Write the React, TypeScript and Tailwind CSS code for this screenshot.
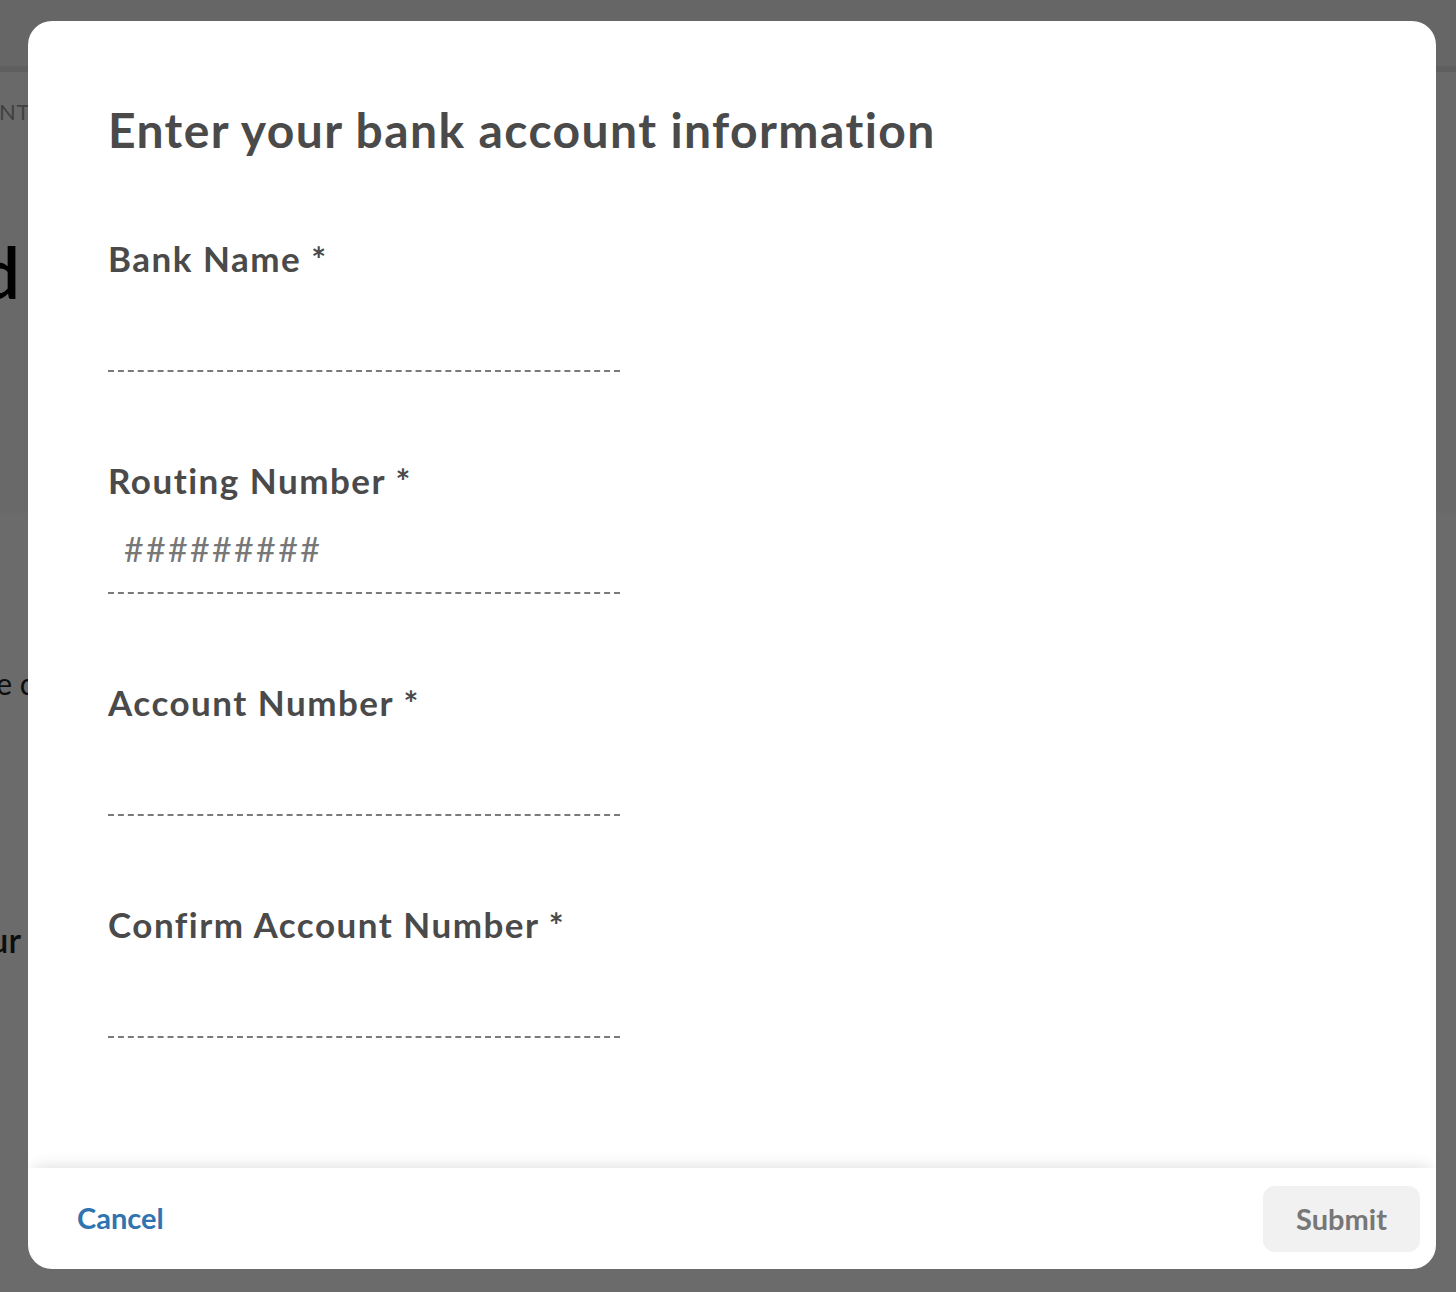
import { useState } from 'react'

const fields = [
  { label: 'Bank Name', placeholder: '' },
  { label: 'Routing Number', placeholder: '#########' },
  { label: 'Account Number', placeholder: '' },
  { label: 'Confirm Account Number', placeholder: '' },
]

const font = { fontFamily: 'Lato, "Open Sans", sans-serif' }

export default function App() {
  const [values, setValues] = useState<string[]>(['', '', '', ''])

  return (
    <div className="relative w-[1456px] h-[1292px] overflow-hidden bg-white" style={font}>
      {/* page behind the dialog */}
      <div className="flex flex-col h-full">
        <div className="h-[72px] bg-[#f4f4f4] border-b-[6px] border-[#e2e2e2]" />
        <div className="h-[441px] bg-[#fafafa] pt-[25px]">
          <div className="w-[30px] flex justify-end whitespace-nowrap text-[22px] leading-[30px] tracking-wide text-[#9a9a9a]">
            PAYMENT
          </div>
          <div className="mt-[108px] w-[20px] flex justify-end whitespace-nowrap text-[72px] font-semibold leading-none text-black">
            Add
          </div>
        </div>
        <div className="flex-1 bg-white">
          <div className="mt-[152px] w-[34px] flex justify-end whitespace-nowrap text-[30px] leading-[36px] text-[#222]">
            the c
          </div>
          <div className="mt-[219px] w-[21px] flex justify-end whitespace-nowrap text-[34px] leading-[40px] font-semibold text-[#222]">
            your
          </div>
        </div>
      </div>

      {/* overlay */}
      <div className="absolute inset-0 bg-[rgba(0,0,0,0.58)]" />

      {/* dialog */}
      <div className="absolute left-[28px] top-[21px] w-[1408px] h-[1248px] bg-white rounded-[24px] flex flex-col overflow-hidden">
        <div className="flex-1 pl-[80px] pt-[85px]">
          <h1 className="text-[48px] font-bold text-[#4a4a4a] leading-none tracking-[1.4px]">
            Enter your bank account information
          </h1>
          <div className="mt-[82px] flex flex-col gap-[86px]">
            {fields.map((f, i) => (
              <div key={i} className="flex flex-col w-[512px]">
                <label className="text-[35px] font-bold text-[#4a4a4a] leading-[44px] tracking-[1.5px]">
                  {f.label} *
                </label>
                <input
                  value={values[i]}
                  onChange={(e) => {
                    const next = [...values]
                    next[i] = e.target.value
                    setValues(next)
                  }}
                  placeholder={f.placeholder}
                  className="mt-[24px] h-[68px] pb-[22px] px-[16px] text-[34px] tracking-[2.3px] text-[#555] placeholder:text-[#777] outline-none border-b-2 border-dashed border-[#7a7a7a] bg-transparent"
                  style={font}
                />
              </div>
            ))}
          </div>
        </div>
        <div className="relative h-[101px] flex items-center justify-between pl-[49px] pr-[16px] shadow-[0_-8px_14px_-6px_rgba(0,0,0,0.12)]">
          <button className="text-[29px] font-bold text-[#2f74b0] -mt-[2px]">Cancel</button>
          <button className="w-[157px] h-[66px] rounded-[12px] bg-[#f1f1f1] text-[29px] font-bold text-[#777]">
            Submit
          </button>
        </div>
      </div>
    </div>
  )
}
